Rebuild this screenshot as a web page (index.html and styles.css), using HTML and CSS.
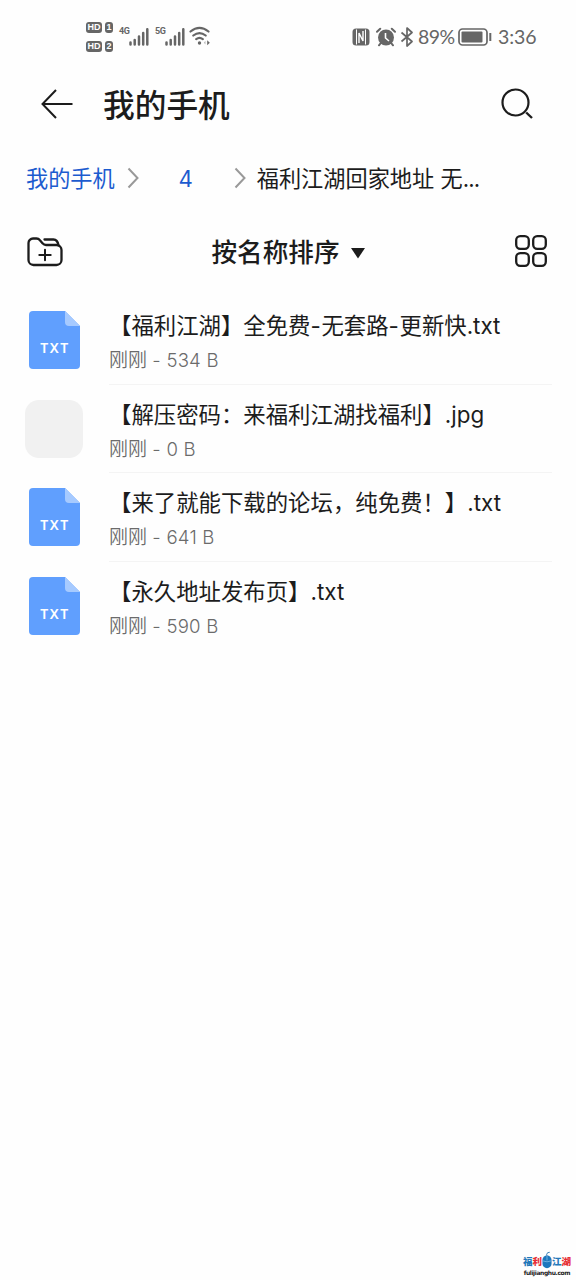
FILE: index.html
```html
<!DOCTYPE html>
<html lang="zh-CN">
<head>
<meta charset="utf-8">
<title>我的手机</title>
<link rel="stylesheet" href="styles.css">
</head>
<body>
<svg class="defs" aria-hidden="true">
  <symbol id="bars" viewBox="0 0 20 18">
    <path d="M1.500 14.500v2M5.700 12v4.500M10 8.500v8M14.200 5v11.500M18.300 1.200v15.300" stroke="currentColor" stroke-width="2.500" stroke-linecap="round"/>
  </symbol>
  <symbol id="file" viewBox="0 0 51 58">
    <path d="M4 0H36L51 15V54a4 4 0 0 1-4 4H4a4 4 0 0 1-4-4V4a4 4 0 0 1 4-4Z" fill="#609ffe"/>
    <path d="M36 0L51 15H40a4 4 0 0 1-4-4Z" fill="#a6caff"/>
  </symbol>
  <symbol id="chevron" viewBox="0 0 12 22">
    <path d="M1.500 1.500L10.500 11L1.500 20.500" fill="none" stroke="#999" stroke-width="2"/>
  </symbol>
</svg>
<div class="phone">
  <header class="status">
    <div class="sims">
      <div class="sim"><span class="hd">HD</span><span class="slot">1</span></div>
      <div class="sim"><span class="hd">HD</span><span class="slot">2</span></div>
    </div>
    <span class="net">4G</span><svg class="bars"><use href="#bars"/></svg>
    <span class="net">5G</span><svg class="bars"><use href="#bars"/></svg>
    <svg class="wifi" viewBox="0 0 22 20">
      <g fill="none" stroke="currentColor" stroke-width="2.200" stroke-linecap="round">
        <path d="M1.500 5.500Q10.500-1.800 19.500 5.500M4.300 9.500Q10.500 4.600 16.700 9.500M7.200 13.200Q10.500 10.700 13.800 13.200"/>
      </g>
      <circle cx="10.500" cy="17" r="1.700" fill="currentColor"/>
      <path d="M16.500 14.800L14.800 16.700L16.500 18.600Z" fill="#bbb"/><path d="M18.200 14.200L20.800 16.700L18.200 19.200Z" fill="currentColor"/>
    </svg>
    <div class="status-right">
      <svg class="nfc" viewBox="0 0 18 18">
        <rect x=".5" y=".5" width="17" height="17" rx="3.500" fill="currentColor"/>
        <path d="M4.500 1.500V16.500M13.500 1.500V16.500" stroke="#fff" stroke-width="1"/>
        <path d="M7 15V5L11 13V3" fill="none" stroke="#fff" stroke-width="1.400"/>
      </svg>
      <svg class="alarm" viewBox="0 0 20 20">
        <circle cx="10" cy="10.500" r="8" fill="currentColor"/>
        <path d="M1 4.700L4.200 1.700M19 4.700L15.800 1.700M4.800 16L3 18.300M15.200 16L17 18.300" stroke="currentColor" stroke-width="2" stroke-linecap="round"/>
        <path d="M9.500 6V11L13 14" fill="none" stroke="#fff" stroke-width="1.600"/>
      </svg>
      <svg class="bt" viewBox="0 0 14 20"><path d="M1.500 5.500L12 14.500L7 19V1L12 5.500L1.500 14.500" fill="none" stroke="currentColor" stroke-width="1.700" stroke-linejoin="round"/></svg>
      <span class="level">89%</span>
      <svg class="battery" viewBox="0 0 34 18">
        <rect x="1" y="1" width="28" height="16" rx="3.500" fill="none" stroke="currentColor" stroke-width="1.700"/>
        <rect x="3.500" y="3.500" width="21" height="11" rx="1" fill="currentColor"/>
        <path d="M32.300 5V13" stroke="currentColor" stroke-width="2"/>
      </svg>
      <span class="clock">3:36</span>
    </div>
  </header>

  <div class="titlebar">
    <svg class="back" viewBox="0 0 32 30"><path d="M31.500 15H1.500M15 1L1.500 15L15 29" fill="none" stroke="currentColor" stroke-width="2"/></svg>
    <h1 class="title">我的手机</h1>
    <svg class="search" viewBox="0 0 32 32"><circle cx="14.500" cy="14.500" r="13" fill="none" stroke="currentColor" stroke-width="2.200"/><path d="M25.200 24.500L31 30" stroke="currentColor" stroke-width="2.400"/></svg>
  </div>

  <nav class="crumbs">
    <a class="crumb-link">我的手机</a>
    <svg class="chevron"><use href="#chevron"/></svg>
    <a class="crumb-link folder">4</a>
    <svg class="chevron"><use href="#chevron"/></svg>
    <span class="current">福利江湖回家地址 无<span class="dots">...</span></span>
  </nav>

  <div class="toolbar">
    <svg class="new-folder" viewBox="0 0 36 30">
      <g fill="none" stroke="currentColor" stroke-width="2.300" stroke-linejoin="round" stroke-linecap="round">
        <path d="M1.500 6A4.500 4.500 0 0 1 6 1.500H9.500Q11.500 1.500 12.700 3L15.500 6.300Q17 8 19 8H29.500A5 5 0 0 1 34.500 13V23A5 5 0 0 1 29.500 28H6.500A5 5 0 0 1 1.500 23Z"/>
        <path d="M17.500 2.500H26.500Q30.500 2.500 31.500 8.300"/>
        <path d="M18 12.800V23.200M12.300 18H23.700" stroke-width="2"/>
      </g>
    </svg>
    <div class="sort"><span>按名称排序</span><svg class="caret" viewBox="0 0 14 11"><path d="M0 0H14L7 10.500Z" fill="currentColor"/></svg></div>
    <svg class="grid" viewBox="0 0 32 32">
      <g fill="none" stroke="currentColor" stroke-width="2.300">
        <rect x="1.200" y="1.200" width="12.600" height="12.600" rx="4"/><rect x="18.200" y="1.200" width="12.600" height="12.600" rx="4"/>
        <rect x="1.200" y="18.200" width="12.600" height="12.600" rx="4"/><rect x="18.200" y="18.200" width="12.600" height="12.600" rx="4"/>
      </g>
    </svg>
  </div>

  <main class="files">
    <div class="row">
      <div class="thumb"><svg class="file"><use href="#file"/></svg><span class="kind">TXT</span></div>
      <div class="info"><div class="name">【福利江湖】全免费<span class="dash">-</span>无套路<span class="dash">-</span>更新快.txt</div><div class="meta">刚刚 <span class="size">- 534 B</span></div></div>
    </div>
    <div class="row">
      <div class="thumb empty"></div>
      <div class="info"><div class="name">【解压密码：来福利江湖找福利】.jpg</div><div class="meta">刚刚 <span class="size">- 0 B</span></div></div>
    </div>
    <div class="row">
      <div class="thumb"><svg class="file"><use href="#file"/></svg><span class="kind">TXT</span></div>
      <div class="info"><div class="name">【来了就能下载的论坛，纯免费！】.txt</div><div class="meta">刚刚 <span class="size">- 641 B</span></div></div>
    </div>
    <div class="row">
      <div class="thumb"><svg class="file"><use href="#file"/></svg><span class="kind">TXT</span></div>
      <div class="info"><div class="name">【永久地址发布页】.txt</div><div class="meta">刚刚 <span class="size">- 590 B</span></div></div>
    </div>
  </main>

  <footer class="mark">
    <div class="mark-top">
      <span class="mark-blue">福</span><span class="mark-red">利</span>
      <svg class="mouse" viewBox="0 0 11 19"><path d="M5.500 5Q4 1.500 8.500 1" fill="none" stroke="#1f6fae" stroke-width="1"/><rect x=".5" y="4.500" width="10" height="14" rx="5" fill="#1c77bd"/><path d="M5.500 5V10M1 10.500Q5.500 12.500 10 10.500" fill="none" stroke="#8dc4ea" stroke-width=".8"/></svg>
      <span class="mark-blue">江</span><span class="mark-red">湖</span>
    </div>
    <div class="mark-url">fulijianghu.com</div>
  </footer>
</div>
</body>
</html>
```

FILE: styles.css
```css
* { box-sizing: border-box; }
body { margin: 0; background: #fefefe; }
svg { display: block; flex: none; }
.defs { position: absolute; width: 0; height: 0; }
.phone {
  width: 576px; height: 1280px; display: flex; flex-direction: column; overflow: hidden;
  color: #1c1c1c; font-family: Inter, "Noto Sans CJK SC", sans-serif; white-space: nowrap;
}

.status { height: 72px; padding: 0 40px 0 86px; display: flex; align-items: center; color: #666; }
.sims { display: flex; flex-direction: column; gap: 8px; margin-top: 2px; }
.sim { display: flex; gap: 3px; }
.hd, .slot { height: 11px; border-radius: 3px; background: #666; color: #fff; font: bold 9px/11px "Liberation Sans", sans-serif; text-align: center; }
.hd { width: 16px; }
.slot { width: 8px; }
.net { width: 10px; margin: -11px 0 0 6px; font: bold 9px/10px Roboto, sans-serif; letter-spacing: -0.5px; }
.bars { width: 20px; height: 18px; margin-top: 1px; }
.wifi { width: 22px; height: 20px; margin-left: 4px; }
.status-right { margin-left: auto; display: flex; align-items: center; font: 19.5px/24px Lato, sans-serif; padding-top: 2px; }
.nfc { width: 18px; height: 18px; }
.alarm { width: 20px; height: 20px; margin-left: 6px; }
.bt { width: 14px; height: 20px; margin-left: 4px; }
.level { width: 37px; margin-left: 4px; letter-spacing: -0.5px; }
.battery { width: 34px; height: 18px; margin-left: 3px; }
.clock { width: 38px; margin-left: 6px; letter-spacing: -0.1px; }

.titlebar { height: 64px; padding: 0 43px 0 41px; display: flex; align-items: center; }
.back { width: 32px; height: 30px; }
.title { margin: 4px 0 0 30px; font-size: 31.7px; line-height: 44px; font-weight: 500; }
.search { width: 32px; height: 32px; margin-left: auto; }

.crumbs { height: 84px; padding: 0 26px; display: flex; align-items: center; font-size: 22.2px; line-height: 30px; }
.crumb-link, .current { margin-top: 2px; }
.crumb-link { color: #1c5bcf; }
.chevron { width: 12px; height: 22px; margin-left: 12px; }
.crumbs .folder { width: 96px; margin-left: -1px; text-align: center; }
.crumbs .folder + .chevron { margin-left: 0; }
.current { margin-left: 11px; }
.dots { letter-spacing: -0.9px; }

.toolbar { height: 62px; padding: 0 29px 0 27px; display: grid; grid-template-columns: 36px 1fr 32px; align-items: center; }
.new-folder { width: 36px; height: 30px; margin-top: 2px; }
.sort { display: flex; align-items: center; justify-content: center; gap: 12px; padding-top: 4px; padding-right: 1px; font-size: 25.6px; line-height: 36px; font-weight: 500; }
.caret { width: 14px; height: 11px; }
.grid { width: 32px; height: 32px; }

.files { padding: 14px 24px 0 25px; }
.row { height: 88.5px; display: flex; align-items: center; gap: 26px; }
.thumb { width: 58px; height: 58px; display: grid; place-items: center; }
.thumb > * { grid-area: 1 / 1; }
.empty { background: #f1f1f1; border-radius: 14px; }
.file { width: 51px; height: 58px; }
.kind { margin-top: 16px; color: #fff; font: 600 14px/16px "Noto Sans", sans-serif; letter-spacing: 1.6px; padding-left: 2px; }
.info { flex: 1; height: 100%; padding-top: 14px; border-bottom: 1px solid #f4f4f4; }
.row:last-child .info { border-bottom: 0; }
.name { font-size: 22.4px; line-height: 32px; }
.dash { letter-spacing: 0.6px; }
.meta { margin-top: 4px; font-size: 19px; line-height: 28px; color: #6b6b6b; font-weight: 350; }
.size { font-size: 18.6px; letter-spacing: 0.2px; }

.mark { margin-top: auto; padding: 0 5px 4px 0; align-self: flex-end; display: flex; flex-direction: column; align-items: center; }
.mark-top { display: flex; align-items: center; font: 900 9.5px/12px "Noto Sans CJK SC", sans-serif; }
.mark-blue { color: #2378b9; }
.mark-red { color: #e62e35; }
.mouse { width: 10px; height: 18px; margin-top: -2px; }
.mark-url { color: #222; font: bold 6px/7px "DejaVu Sans", sans-serif; letter-spacing: -0.4px; }
```
